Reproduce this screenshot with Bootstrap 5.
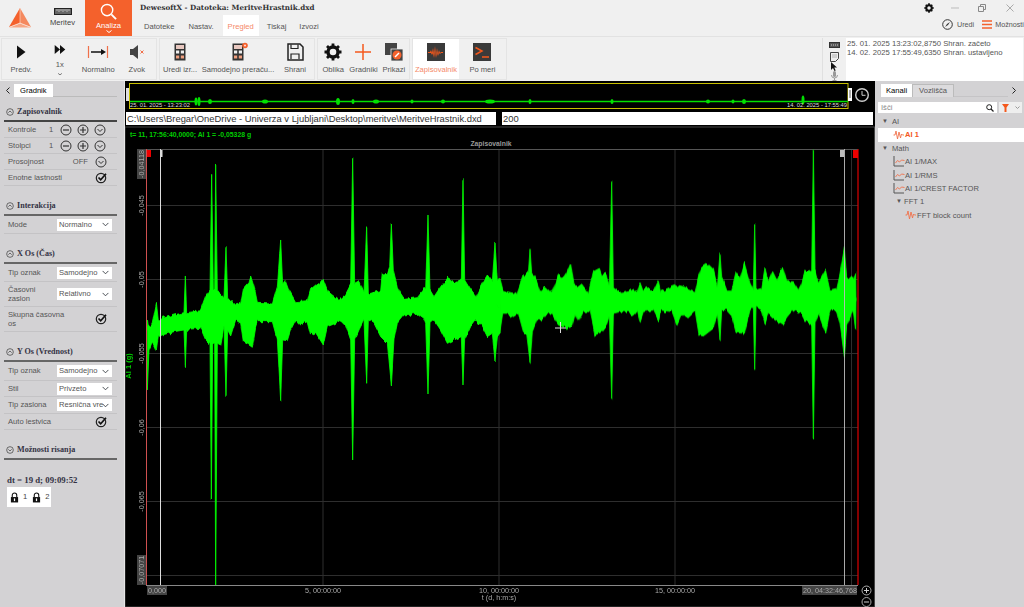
<!DOCTYPE html>
<html lang="sl">
<head>
<meta charset="utf-8">
<title>DewesoftX</title>
<link href="https://cdn.jsdelivr.net/npm/bootstrap@5.3.0/dist/css/bootstrap.min.css" rel="stylesheet">
<style>
html,body{height:607px;overflow:hidden}
body{font-family:"Liberation Sans",Arial,sans-serif;font-size:7.6px;color:#444;background:#f0f0f0;line-height:1.25;width:1024px}
.hdr{height:37px;background:#f0f0f0;border-bottom:1px solid #e2e2e2}
.logo{width:40px}
.mod{width:45px;height:36px;color:#444}
.mod.on{width:47px;background:#f4612c;color:#fff}
.mod small{font-size:7.6px}
.mi1{margin:8px 0 3px}
.mi2{margin:3px 0 1px}
.ttl{font-family:"DejaVu Serif",serif;font-weight:700;font-size:7.15px;color:#333;margin:4px 0 0 8px;white-space:nowrap;height:11px}
.tabs{margin-left:3px}
.tabs a{display:block;color:#555;font-size:7.6px;height:21px;line-height:23px;padding:0 5px;text-decoration:none}
.tabs a.on{background:#fff;color:#f58a6a}
.m4{margin-left:4px}.m3{margin-left:3px}
.hr{width:104px}
.wc{height:16px}
.wc svg{display:block}
.tools{font-size:7.2px;color:#555;height:17px;white-space:nowrap;margin-left:22px}
.rib{height:44px;background:#f0f0f0;padding:1px 1px 0}
.grp{height:42px;border:1px solid #e4e4e4;margin-right:2px}
.rb{height:40px;color:#555;font-size:7.6px;padding:3px 0 0;white-space:nowrap;border:0;border-radius:0;line-height:1}
.rb svg{display:block;margin-bottom:4px}
.rb:hover{color:#555}
.rb.on{background:#fff;color:#f58a6a}
.w39{width:38.5px}.w40{width:40px}.w77{width:76px}.w38{width:38px}.w31{width:30.33px}.w47{width:47px}.w46{width:46px}
.side-ic{width:24px;height:44px;border-left:1px solid #e0e0e0;margin-left:auto}
.log{width:177px;height:44px;background:#fff;font-size:7.7px;padding:1px;color:#555;white-space:nowrap;line-height:9.4px}
.main{height:526px}
.lp{width:125px;background:#d3d2d4;border-right:1px solid #e6e6e6;padding:3px 7px 0 4px}
.rp{width:149px;background:#d3d2d4}
.cc{width:750px;background:#000}
.tb{height:13px;border-bottom:1px solid #bbb;margin:0}
.tb .nav-link{background:#fff;color:#f58a6a;font-size:7.6px;padding:0 6px;height:13px;line-height:13px;border:0;border-radius:0}
.tb .nav-link.off{background:#dcdbdd;color:#555;border:1px solid #bbb;border-bottom:0;line-height:12px}
.bk{margin:0 4px 0 2px}
.hd{height:18px;border-bottom:2px solid #666;margin-top:12px;font-family:"Liberation Serif",serif;font-weight:700;font-size:8.1px;color:#334;padding-left:2px;white-space:nowrap}
.hd.first{margin-top:7px;border-bottom-color:#444}
.hd svg{margin-right:3px;flex:none}
.row1{min-height:16px;border-bottom:1px solid #c4c3c5;padding:0 5px 0 4px;color:#555}
.row1 .ic:last-child{margin-right:3px}
.h17{min-height:17px}.h18{min-height:18px}.h19{min-height:19px}.h25{min-height:25px}
.lb{width:49px;flex:none}
.lb2{width:41px;flex:none}
.num{width:8.5px;flex:none}
.wrapl{width:60px;margin-right:25px}
.ic{width:17px;display:flex;justify-content:center;flex:none}
.form-select.sel{width:55px;height:12px;min-height:0;padding:0 9px 0 2px;font-size:7.6px;line-height:12px;border:0;border-radius:0;background-position:right 3px center;background-size:7px 7px;color:#555;font-family:inherit;flex:none}
.dt{font-family:"Liberation Serif",serif;font-weight:700;font-size:8.8px;color:#334;margin:15px 0 0 3px;line-height:11px}
.lock{background:#fff;width:44px;height:20px;margin:1px 0 0 3px;gap:5px;padding-left:3px;font-size:7.6px}
.pbar{height:13px;margin:0 2px 1px 1px;gap:6px}
.pbar div{background:#fff;color:#333;height:13px;line-height:13px;font-size:9.4px;padding-left:1px;white-space:nowrap;overflow:hidden}
.p1{width:370px}.p2{width:371px}
.rt{padding:3px 0 0 6px}
.rt .tb{border-bottom-color:#c5c4c6}
.rt .k{padding:0 5px}
.srow{margin:5px 0 0 3px}
.srch{height:11px;background:#fff;width:119px;color:#888;padding:0 3px}
.fbtn{width:13px;height:11px;background:#eee}
.fb1{margin-left:2px}
.fb2{width:10px}
.tree{margin-top:2px}
.list-group-item.t{background:transparent;border:0;padding:0 0 0 7px;height:13.4px;color:#555;font-size:7.6px;white-space:nowrap}
.list-group-item.t.on{background:#fff;color:#f4581c;font-weight:700;margin-left:3px;padding-left:15px}
.list-group-item.t.i2{padding-left:18px}
.list-group-item.t.i3{padding-left:30px}
.tri{font-size:6px;width:8px;color:#555;display:inline-block}
.tri.in{margin-left:3px}
.gp{margin-left:2px}
.t svg{flex:none}
svg text{font-family:"Liberation Sans",sans-serif}
.ax{font-size:7.2px;fill:#aaa}
.ovt{font-size:5.8px;fill:#ddd}
.stat{font-size:6.85px;fill:#0c0;font-weight:700}
.cap{font-size:6.8px;fill:#999;font-weight:700}
.yl{font-size:7.5px;fill:#0c0;font-weight:700}
.wv polygon{stroke:#0f0;stroke-width:2.4;stroke-linejoin:round}
</style>
</head>
<body>
<svg width="0" height="0" class="position-absolute">
<defs>
<symbol id="minus" viewBox="0 0 12 12"><circle cx="6" cy="6" r="5" fill="none" stroke="#333"/><path d="M3 6h6" stroke="#333" stroke-width="1.2"/></symbol>
<symbol id="plus" viewBox="0 0 12 12"><circle cx="6" cy="6" r="5" fill="none" stroke="#333"/><path d="M3 6h6M6 3v6" stroke="#333" stroke-width="1.2"/></symbol>
<symbol id="dn" viewBox="0 0 12 12"><circle cx="6" cy="6" r="5" fill="none" stroke="#333"/><path d="M3.500 5l2.500 2.500L8.500 5" fill="none" stroke="#333"/></symbol>
<symbol id="up" viewBox="0 0 12 12"><circle cx="6" cy="6" r="5" fill="none" stroke="#333"/><path d="M3.500 7L6 4.500 8.500 7" fill="none" stroke="#333"/></symbol>
<symbol id="chk" viewBox="0 0 12 12"><circle cx="6" cy="6" r="4.700" fill="none" stroke="#222" stroke-width="1.200"/><path d="M3.500 5.500l2.200 2.300L11 1.800" fill="none" stroke="#111" stroke-width="1.700"/></symbol>
<symbol id="lk" viewBox="0 0 10 12"><path d="M2.500 5.500V3.500a2.500 2.500 0 0 1 5 0v2" fill="none" stroke="#111" stroke-width="1.200"/><rect x="1" y="5.500" width="8" height="6" fill="#111"/><rect x="4.300" y="7" width="1.400" height="3" fill="#fff"/></symbol>
<symbol id="wave" viewBox="0 0 12 10"><path d="M.5 5h1.500l1-4 1.500 8 1.500-7 1.500 6 1-4 1 1h1.500" fill="none" stroke="#f0704a" stroke-width=".9"/></symbol>
<symbol id="axs" viewBox="0 0 12 11"><path d="M1 0v10h10" fill="none" stroke="#555" stroke-width="1"/><path d="M2.500 7l2-2.500 2 1.500 2-2 3 .5" fill="none" stroke="#f0704a" stroke-width=".9"/></symbol>
<symbol id="calc" viewBox="0 0 12 18"><rect x=".5" y=".5" width="11" height="17" fill="#333"/><rect x="2" y="2" width="8" height="4" fill="#e8c8c0"/><g fill="#f1f1f1"><rect x="2" y="7.500" width="3.200" height="3"/><rect x="6.800" y="7.500" width="3.200" height="3"/></g><g fill="#f0a080"><rect x="2" y="12.500" width="3.200" height="3"/><rect x="6.800" y="12.500" width="3.200" height="3"/></g></symbol>
<filter id="rough" filterUnits="userSpaceOnUse" x="125" y="127" width="750" height="480" color-interpolation-filters="sRGB">
  <feTurbulence type="fractalNoise" baseFrequency=".3 .015" numOctaves="2" seed="4" result="n"/>
  <feColorMatrix in="n" type="matrix" values="0 0 0 0 .5  1 0 0 0 0  0 0 0 0 0  0 0 0 0 1" result="m"/>
  <feDisplacementMap in="SourceGraphic" in2="m" scale="7" xChannelSelector="R" yChannelSelector="G"/>
</filter>
</defs>
</svg>

<header class="hdr d-flex">
  <div class="logo d-flex align-items-center justify-content-center">
    <svg width="22" height="20" viewBox="0 0 22 20"><path d="M11 0 22 19 11 15Z" fill="#f4895f"/><path d="M11 0 0 19 11 15Z" fill="#f4612c"/><path d="M0 19.500 11 15.500 22 19.500Z" fill="#f7a583"/><path d="M11 1v14M1 19l10-4 10 4" stroke="#fde3d7" stroke-width=".6" fill="none"/></svg>
  </div>
  <div class="mod d-flex flex-column align-items-center">
    <svg class="mi1" width="18" height="7" viewBox="0 0 18 7"><rect x=".5" y=".5" width="17" height="6" fill="#666" stroke="#222"/><path d="M3 1v2M5 1v3M7 1v2M9 1v3M11 1v2M13 1v3M15 1v2" stroke="#ddd" stroke-width=".7"/></svg>
    <small>Meritev</small>
  </div>
  <div class="mod on d-flex flex-column align-items-center">
    <svg class="mi2" width="17" height="17" viewBox="0 0 18 18"><circle cx="7.500" cy="7.500" r="6" fill="none" stroke="#fff" stroke-width="1.500"/><path d="M12 12l5 5" stroke="#fff" stroke-width="2"/></svg>
    <small>Analiza</small>
    <svg width="6" height="3" viewBox="0 0 6 3"><path d="M.5.500 3 2.500 5.500.5" fill="none" stroke="#fff"/></svg>
  </div>
  <div class="flex-grow-1 d-flex flex-column">
    <div class="ttl">DewesoftX - Datoteka: MeritveHrastnik.dxd</div>
    <nav class="tabs d-flex">
      <a href="#" class="m4">Datoteke</a><a href="#" class="m4">Nastav.</a><a href="#" class="on m4">Pregled</a><a href="#" class="m3">Tiskaj</a><a href="#" class="m3">Izvozi</a>
    </nav>
  </div>
  <div class="hr d-flex flex-column">
    <div class="wc d-flex align-items-center">
      <svg class="ms-1" width="10" height="10" viewBox="0 0 20 20"><circle cx="10" cy="10" r="5.500" fill="none" stroke="#111" stroke-width="4"/><path d="M10 .5v4M10 15.500v4M.5 10h4M15.500 10h4M3.500 3.500l3 3M13.500 13.500l3 3M16.500 3.500l-3 3M6.500 13.500l-3 3" stroke="#111" stroke-width="3.400"/></svg>
      <svg style="margin-left:17px" width="8" height="2" viewBox="0 0 8 2"><path d="M0 1h8" stroke="#bbb"/></svg>
      <svg style="margin-left:19px" width="8" height="8" viewBox="0 0 8 8"><path d="M.5 2.500h5v5h-5zM2.500 2.500V.5h5v5h-2" fill="none" stroke="#888"/></svg>
      <svg style="margin-left:20px" width="8" height="8" viewBox="0 0 8 8"><path d="M.5.500l7 7M7.500.5l-7 7" stroke="#aaa"/></svg>
    </div>
    <div class="tools d-flex align-items-center">
      <svg width="11" height="11" viewBox="0 0 11 11"><circle cx="5.500" cy="5.500" r="4.800" fill="none" stroke="#333"/><path d="M8 3 6 6 3 8 5 5z" fill="#333"/></svg>
      <span class="ms-1">Uredi</span>
      <svg class="ms-2" width="10" height="9" viewBox="0 0 10 9"><path d="M0 1h10M0 4.500h10M0 8h10" stroke="#f4612c" stroke-width="1.400"/></svg>
      <span style="margin-left:3px">Možnosti</span>
    </div>
  </div>
</header>

<section class="rib d-flex">
  <div class="grp d-flex">
    <button class="btn rb w39 d-flex flex-column align-items-center"><svg width="20" height="20" viewBox="0 0 20 20"><path d="M6 3.500 14.500 10 6 16.500Z" fill="#111"/></svg>Predv.</button>
    <button class="btn rb w39 d-flex flex-column align-items-center"><svg width="20" height="20" viewBox="0 0 20 20"><path d="M3 4 10 10 3 16ZM10 4 17 10 10 16Z" fill="#111"/></svg>1x<svg class="mt-1" width="6" height="3" viewBox="0 0 6 3"><path d="M.5.500 3 2.500 5.500.5" fill="none" stroke="#555"/></svg></button>
    <button class="btn rb w39 d-flex flex-column align-items-center"><svg width="24" height="20" viewBox="0 0 24 20"><path d="M2.500 4v12M21.500 4v12" stroke="#f0704a" stroke-width="1.200"/><path d="M5 10h11" stroke="#111" stroke-width="1.500"/><path d="M15 7l5 3-5 3z" fill="#111"/></svg>Normalno</button>
    <button class="btn rb w39 d-flex flex-column align-items-center"><svg width="20" height="20" viewBox="0 0 20 20"><path d="M3 7h3l5-4v14l-5-4H3z" fill="#444"/><path d="M13.500 8.500l3 3M16.500 8.500l-3 3" stroke="#f0704a"/></svg>Zvok</button>
  </div>
  <div class="grp d-flex">
    <button class="btn rb w40 d-flex flex-column align-items-center"><svg width="20" height="20" viewBox="-4 0 20 18"><use href="#calc" width="12" height="18"/></svg>Uredi izr...</button>
    <button class="btn rb w77 d-flex flex-column align-items-center"><svg width="20" height="20" viewBox="-4 0 20 18"><use href="#calc" width="12" height="18"/><circle cx="13" cy="2.500" r="2.800" fill="#f4612c"/><circle cx="13" cy="2.500" r="1" fill="#fdd"/></svg>Samodejno preraču...</button>
    <button class="btn rb w38 d-flex flex-column align-items-center"><svg width="20" height="20" viewBox="0 0 20 20"><path d="M3 2h12l3 3v13H3z" fill="none" stroke="#222" stroke-width="1.500"/><path d="M6 2.500v4h7v-4M6 17v-5h8v5" fill="none" stroke="#222" stroke-width="1.200"/></svg>Shrani</button>
  </div>
  <div class="grp d-flex">
    <button class="btn rb w31 d-flex flex-column align-items-center"><svg width="20" height="20" viewBox="0 0 20 20"><circle cx="10" cy="10" r="5" fill="none" stroke="#111" stroke-width="3.400"/><path d="M10 1.500v4M10 14.500v4M1.500 10h4M14.500 10h4M4 4l3 3M13 13l3 3M16 4l-3 3M7 13l-3 3" stroke="#111" stroke-width="2.800"/></svg>Oblika</button>
    <button class="btn rb w31 d-flex flex-column align-items-center"><svg width="20" height="20" viewBox="0 0 20 20"><path d="M2 10h16M10 2v16" stroke="#f4581c" stroke-width="1.500"/></svg>Gradniki</button>
    <button class="btn rb w31 d-flex flex-column align-items-center"><svg width="20" height="20" viewBox="0 0 20 20"><rect x="1" y="1" width="12" height="12" fill="#444"/><rect x="7" y="7" width="12" height="12" fill="#444" stroke="#f0f0f0" stroke-width=".8"/><circle cx="13" cy="13" r="4.500" fill="#f4612c"/><path d="M11 15l4-4" stroke="#fff" stroke-width="1.500"/></svg>Prikazi</button>
  </div>
  <div class="grp d-flex">
    <button class="btn rb on w46 d-flex flex-column align-items-center"><svg width="20" height="20" viewBox="0 0 20 20"><rect x="1" y="1" width="18" height="18" fill="#3a3a3a"/><path d="M2 10h2l1-2 1 3 1-5 1 6 1-8 1 9 1-7 1 6 1-4 1 3 1-1h2v1h-2l-1 1-1-1-1 3-1-3-1 5-1-6-1 6-1-5-1 2-1-2H2z" fill="#f4581c"/></svg>Zapisovalnik</button>
    <button class="btn rb w47 d-flex flex-column align-items-center"><svg width="20" height="20" viewBox="0 0 20 20"><rect x="1" y="1" width="18" height="18" fill="#3a3a3a"/><path d="M3.500 5.500 10 9 3.500 12.500" fill="none" stroke="#f4581c" stroke-width="1.500"/><path d="M10 15h7" stroke="#f4581c" stroke-width="1.500"/></svg>Po meri</button>
  </div>
  <div class="side-ic d-flex flex-column align-items-center pt-1">
    <svg width="11" height="6" viewBox="0 0 11 6" class="mb-1"><rect x=".5" y=".5" width="10" height="5" fill="#555" stroke="#333"/><path d="M2 3h7" stroke="#ccc" stroke-dasharray="1 1"/></svg>
    <svg width="9" height="10" viewBox="0 0 9 10"><path d="M.5.500h8v6l-3 3h-5z" fill="#eee" stroke="#444"/><path d="M2 3h5M2 5h5" stroke="#888" stroke-width=".6"/></svg>
    <svg width="7" height="9" viewBox="0 0 7 9"><path d="M0 0v8l2-2 1.500 3 1.200-.6L3.300 5.500H6z" fill="#111"/></svg>
    <svg width="7" height="10" viewBox="0 0 7 10"><rect x="2" y="0" width="3" height="6" rx="1.500" fill="#999"/><path d="M.5 4a3 3 0 0 0 6 0M3.500 7v2M1.500 9.500h4" fill="none" stroke="#999"/></svg>
  </div>
  <div class="log">25. 01. 2025 13:23:02,8750 Shran. začeto<br>14. 02. 2025 17:55:49,6350 Shran. ustavljeno</div>
</section>

<main class="main d-flex">
  <aside class="lp">
    <div class="d-flex align-items-center">
      <svg class="bk" width="4" height="7" viewBox="0 0 4 7"><path d="M3.500.500.5 3.500l3 3" fill="none" stroke="#222"/></svg>
      <ul class="nav nav-tabs tb flex-grow-1"><li class="nav-item"><a class="nav-link active" href="#">Gradnik</a></li></ul>
    </div>

    <div class="hd first d-flex align-items-center"><svg width="8" height="8"><use href="#up"/></svg>Zapisovalnik</div>
    <div class="row1 d-flex align-items-center"><span class="lb2">Kontrole</span><span class="num">1</span><span class="ic"><svg width="12" height="12"><use href="#minus"/></svg></span><span class="ic"><svg width="12" height="12"><use href="#plus"/></svg></span><span class="ic"><svg width="12" height="12"><use href="#dn"/></svg></span></div>
    <div class="row1 d-flex align-items-center"><span class="lb2">Stolpci</span><span class="num">1</span><span class="ic"><svg width="12" height="12"><use href="#minus"/></svg></span><span class="ic"><svg width="12" height="12"><use href="#plus"/></svg></span><span class="ic"><svg width="12" height="12"><use href="#dn"/></svg></span></div>
    <div class="row1 d-flex align-items-center"><span class="flex-grow-1">Prosojnost</span><span class="me-1">OFF</span><span class="ic"><svg width="12" height="12"><use href="#dn"/></svg></span></div>
    <div class="row1 d-flex align-items-center"><span class="flex-grow-1">Enotne lastnosti</span><span class="ic"><svg width="12" height="12"><use href="#chk"/></svg></span></div>

    <div class="hd d-flex align-items-center"><svg width="8" height="8"><use href="#up"/></svg>Interakcija</div>
    <div class="row1 h18 d-flex align-items-center"><span class="lb">Mode</span><select class="form-select sel"><option>Normalno</option></select></div>

    <div class="hd d-flex align-items-center"><svg width="8" height="8"><use href="#up"/></svg>X Os (Čas)</div>
    <div class="row1 h18 d-flex align-items-center"><span class="lb">Tip oznak</span><select class="form-select sel"><option>Samodejno</option></select></div>
    <div class="row1 h25 d-flex align-items-center"><span class="lb">Časovni zaslon</span><select class="form-select sel"><option>Relativno</option></select></div>
    <div class="row1 h25 d-flex align-items-center"><span class="wrapl">Skupna časovna os</span><span class="ic"><svg width="12" height="12"><use href="#chk"/></svg></span></div>

    <div class="hd d-flex align-items-center"><svg width="8" height="8"><use href="#up"/></svg>Y Os (Vrednost)</div>
    <div class="row1 h19 d-flex align-items-center"><span class="lb">Tip oznak</span><select class="form-select sel"><option>Samodejno</option></select></div>
    <div class="row1 d-flex align-items-center"><span class="lb">Stil</span><select class="form-select sel"><option>Privzeto</option></select></div>
    <div class="row1 h17 d-flex align-items-center"><span class="lb">Tip zaslona</span><select class="form-select sel"><option>Resnična vrednost</option></select></div>
    <div class="row1 d-flex align-items-center"><span class="flex-grow-1">Auto lestvica</span><span class="ic"><svg width="12" height="12"><use href="#chk"/></svg></span></div>

    <div class="hd d-flex align-items-center"><svg width="8" height="8"><use href="#dn"/></svg>Možnosti risanja</div>
    <div class="dt">dt = 19 d; 09:09:52</div>
    <div class="lock d-flex align-items-center"><span class="d-flex align-items-center gap-1"><svg width="9" height="11"><use href="#lk"/></svg>1</span><span class="d-flex align-items-center gap-1"><svg width="9" height="11"><use href="#lk"/></svg>2</span></div>
  </aside>

  <div class="cc d-flex flex-column">
    <svg width="750" height="31" viewBox="125 81 750 31" class="d-block flex-none">
      <rect x="129.500" y="83.500" width="718.500" height="25" fill="none" stroke="#c8c000"/>
      <path d="M130 100.800H848v1.500H130z" fill="#00e000"/>
      <g fill="#00e000"><ellipse cx="196" cy="101.500" rx="1.500" ry="4"/><ellipse cx="199" cy="101.500" rx="1.500" ry="4.500"/><ellipse cx="210" cy="101.500" rx="2" ry="2.500"/><ellipse cx="265" cy="101.500" rx="3" ry="2"/><ellipse cx="338" cy="101.500" rx="2" ry="3.500"/><ellipse cx="353" cy="101.500" rx="1.500" ry="2.500"/><ellipse cx="376" cy="101.500" rx="3" ry="2"/><ellipse cx="412" cy="101.500" rx="1.500" ry="2"/><ellipse cx="443" cy="101.500" rx="2" ry="2"/><ellipse cx="490" cy="101.500" rx="5" ry="2"/><ellipse cx="530" cy="101.500" rx="1.500" ry="2.500"/><ellipse cx="612" cy="101.500" rx="1.500" ry="2.500"/><ellipse cx="708" cy="101.500" rx="2" ry="2"/><ellipse cx="733" cy="101.500" rx="1.500" ry="2"/><ellipse cx="744" cy="101.500" rx="2" ry="2.500"/><ellipse cx="803" cy="100" rx="1.500" ry="4.500"/></g>
      <text x="130" y="106.500" class="ax ovt">25. 01. 2025 - 13:23:02</text>
      <text x="847" y="106.500" text-anchor="end" class="ax ovt">14. 02. 2025 - 17:55:49</text>
      <rect x="126" y="88" width="3" height="13" fill="#ddd"/><rect x="848" y="88" width="4" height="13" fill="#fff"/><path d="M850 90v8" stroke="#555"/>
      <circle cx="862" cy="95" r="6.300" fill="none" stroke="#ccc" stroke-width="1.400"/><path d="M862 91v4.300h3.500" fill="none" stroke="#ccc"/>
    </svg>
    <div class="pbar d-flex flex-none"><div class="p1">C:\Users\Bregar\OneDrive - Univerza v Ljubljani\Desktop\meritve\MeritveHrastnik.dxd</div><div class="p2">200</div></div>
    <svg width="750" height="481" viewBox="125 126 750 481" class="d-block flex-none">
      <rect x="125" y="127" width="749.500" height="480" fill="#000" stroke="#444"/>
      <text x="130" y="136.500" class="stat">t= 11, 17:56:40,0000; AI 1 = -0,05328 g</text>
      <text x="491" y="146" text-anchor="middle" class="cap">Zapisovalnik</text>
      <g stroke="#2e2e2e"><path d="M146 205.500H858M146 279.500H858M146 353.500H858M146 427.500H858M146 501.500H858M146 575.500H858M323 149V585M499 149V585M675 149V585M851.500 149V585"/></g>
      <path d="M146 149.500H858" stroke="#555"/>
      <g filter="url(#rough)" class="wv">
      <g fill="#0f0" transform="translate(124 150) scale(.33333)">
        <polygon points="70,510 75,545 85,520 97,460 103,515 115,505 150,495 180,488 184,378 188,488 230,482 245,440 258,420 263,70 268,420 272,420 275,48 280,425 290,430 300,440 306,292 311,450 320,450 335,465 350,460 358,415 375,395 380,378 390,410 400,460 445,462 460,410 470,270 476,405 485,392 495,420 515,455 550,452 560,415 575,402 585,405 598,388 610,420 635,440 645,448 665,430 680,400 686,28 692,400 705,392 720,430 728,230 733,435 750,430 770,425 775,372 790,370 797,350 802,222 808,360 820,410 830,430 840,445 880,440 900,415 905,420 912,195 918,420 930,440 950,410 970,385 985,395 1000,400 1012,385 1017,85 1022,390 1040,420 1055,440 1075,400 1090,375 1105,395 1113,276 1120,395 1128,385 1128,470 900,480 400,490 115,530 70,540"/>
        <polygon points="70,720 75,600 85,575 97,603 103,560 115,555 150,545 180,540 184,650 188,538 230,535 245,570 258,580 262,1050 266,580 272,580 275,1305 280,580 290,585 300,530 306,740 311,540 320,558 335,510 350,520 358,575 375,585 385,592 395,530 400,515 445,515 460,570 470,752 476,570 490,572 500,540 515,510 530,525 550,515 560,555 575,548 598,585 610,530 635,520 650,510 665,525 680,570 686,930 692,570 705,540 720,510 728,700 733,510 750,520 770,560 790,580 802,707 810,570 820,520 840,495 880,490 900,505 905,520 912,735 918,520 930,510 950,540 970,580 990,570 1012,560 1017,705 1022,570 1040,530 1055,510 1075,530 1090,560 1105,550 1113,630 1120,560 1128,549 1128,470 900,470 400,480 115,520 70,530"/>
      </g>
      <g fill="#0f0" transform="translate(500 150) scale(.33333)">
        <polygon points="-1,385 8,420 20,425 50,432 70,375 85,370 90,297 95,370 105,380 120,425 135,410 155,430 175,375 190,385 200,370 212,340 222,405 235,410 245,402 265,430 280,365 298,355 305,375 318,370 328,410 335,92 340,410 365,430 385,425 400,415 412,425 420,398 428,420 445,410 460,425 475,393 482,425 510,412 530,405 550,410 585,425 595,380 605,352 622,340 640,358 652,410 660,308 665,380 680,420 695,420 708,365 720,385 733,340 750,400 760,420 764,220 768,420 785,415 795,355 805,395 818,365 830,390 848,352 860,395 880,395 895,420 905,400 915,365 935,360 940,0 945,360 955,400 977,360 990,420 1010,415 1020,370 1033,290 1040,385 1060,385 1067,365 1068,450 -1,460"/>
        <polygon points="-1,550 8,490 20,490 40,500 55,490 70,545 80,555 90,638 97,545 110,510 125,510 140,490 155,490 175,525 200,535 215,530 225,490 235,515 250,485 270,485 285,555 305,545 320,525 328,500 335,752 340,490 360,485 385,485 400,495 412,480 420,515 430,485 460,480 475,510 482,480 515,485 530,525 545,490 560,505 585,480 597,555 610,558 640,535 652,490 660,570 665,480 680,478 695,495 708,548 733,550 750,480 760,470 764,662 768,470 785,480 795,522 805,490 818,505 848,525 860,505 880,480 905,490 915,510 935,525 940,868 945,520 955,490 977,550 990,480 1010,480 1020,520 1033,620 1040,530 1060,480 1067,540 1068,440 -1,440"/>
      </g>
      </g>
      <path d="M146.500 149V585" stroke="#d05050"/>
      <path d="M160.500 149V585" stroke="#ddd"/>
      <path d="M844.500 149V585" stroke="#bbb" stroke-opacity=".9"/>
      <path d="M858 149V585" stroke="#d00" stroke-width="1.200"/>
      <rect x="147" y="150" width="4" height="7" fill="#e00"/>
      <rect x="160" y="150" width="2.500" height="7" fill="#ddd"/>
      <rect x="840" y="150" width="4" height="7" fill="#bbb"/>
      <rect x="853" y="150" width="5" height="8" fill="#e00"/>
      <path d="M146 585.500H858" stroke="#888"/>
      <rect x="137" y="149" width="9" height="30" fill="#444"/>
      <rect x="137" y="555" width="9" height="30" fill="#444"/>
      <rect x="147" y="586" width="20" height="9" fill="#444"/>
      <rect x="802" y="586" width="55" height="9" fill="#444"/>
      <g class="ax">
        <text transform="translate(143.500 164) rotate(-90)" text-anchor="middle">-0,04118</text>
        <text transform="translate(143.500 205.500) rotate(-90)" text-anchor="middle">-0,045</text>
        <text transform="translate(143.500 279.500) rotate(-90)" text-anchor="middle">-0,05</text>
        <text transform="translate(143.500 353.500) rotate(-90)" text-anchor="middle">-0,055</text>
        <text transform="translate(143.500 427.500) rotate(-90)" text-anchor="middle">-0,06</text>
        <text transform="translate(143.500 501.500) rotate(-90)" text-anchor="middle">-0,065</text>
        <text transform="translate(143.500 570) rotate(-90)" text-anchor="middle">-0,07071</text>
        <text x="157" y="593" text-anchor="middle">0,000</text>
        <text x="323" y="593" text-anchor="middle">5, 00:00:00</text>
        <text x="499" y="593" text-anchor="middle">10, 00:00:00</text>
        <text x="499" y="600" text-anchor="middle">t (d, h:m:s)</text>
        <text x="675" y="593" text-anchor="middle">15, 00:00:00</text>
        <text x="830" y="593" text-anchor="middle">20, 04:32:46,768</text>
      </g>
      <text transform="translate(131 366) rotate(-90)" text-anchor="middle" class="yl">AI 1 (g)</text>
      <path d="M555 328h11M560.500 322v11" stroke="#ddd"/>
      <g fill="none" stroke="#aaa"><circle cx="866.500" cy="590.500" r="4.500"/><circle cx="866.500" cy="602" r="4.500"/></g>
      <path d="M864 590.500h5M866.500 588v5M864 602h5" stroke="#ccc"/>
    </svg>
  </div>

  <aside class="rp">
    <div class="rt d-flex align-items-center">
      <ul class="nav nav-tabs tb flex-grow-1 me-1"><li class="nav-item"><a class="nav-link active k" href="#">Kanali</a></li><li class="nav-item"><a class="nav-link off" href="#">Vozlišča</a></li></ul>
      <svg class="me-2" width="4" height="7" viewBox="0 0 4 7"><path d="M.5.500l3 3-3 3" fill="none" stroke="#222"/></svg>
    </div>
    <div class="srow d-flex align-items-center">
      <div class="srch d-flex align-items-center justify-content-between">Išči<svg width="8" height="8" viewBox="0 0 8 8"><circle cx="3.200" cy="3.200" r="2.500" fill="none" stroke="#222"/><path d="M5 5l2.500 2.500" stroke="#222" stroke-width="1.200"/></svg></div>
      <div class="fbtn fb1 d-flex align-items-center justify-content-center"><svg width="7" height="8" viewBox="0 0 7 8"><path d="M0 0h7L4.500 3.500V8h-2V3.500z" fill="#f4581c"/></svg></div>
      <div class="fbtn fb2 d-flex align-items-center justify-content-center"><svg width="5" height="3" viewBox="0 0 5 3"><path d="M.5.500l2 2 2-2" fill="none" stroke="#999"/></svg></div>
    </div>
    <div class="list-group list-group-flush tree">
      <div class="list-group-item t d-flex align-items-center"><span class="tri">▼</span><span class="gp">AI</span></div>
      <div class="list-group-item t on d-flex align-items-center"><svg width="12" height="10"><use href="#wave"/></svg>AI 1</div>
      <div class="list-group-item t d-flex align-items-center"><span class="tri">▼</span><span class="gp">Math</span></div>
      <div class="list-group-item t i2 d-flex align-items-center"><svg width="12" height="11"><use href="#axs"/></svg>AI 1/MAX</div>
      <div class="list-group-item t i2 d-flex align-items-center"><svg width="12" height="11"><use href="#axs"/></svg>AI 1/RMS</div>
      <div class="list-group-item t i2 d-flex align-items-center"><svg width="12" height="11"><use href="#axs"/></svg>AI 1/CREST FACTOR</div>
      <div class="list-group-item t i2 d-flex align-items-center"><span class="tri in">▼</span><span>FFT 1</span></div>
      <div class="list-group-item t i3 d-flex align-items-center"><svg width="12" height="10"><use href="#wave"/></svg>FFT block count</div>
    </div>
  </aside>
</main>
<script src="https://cdn.jsdelivr.net/npm/bootstrap@5.3.0/dist/js/bootstrap.bundle.min.js"></script>
</body>
</html>
